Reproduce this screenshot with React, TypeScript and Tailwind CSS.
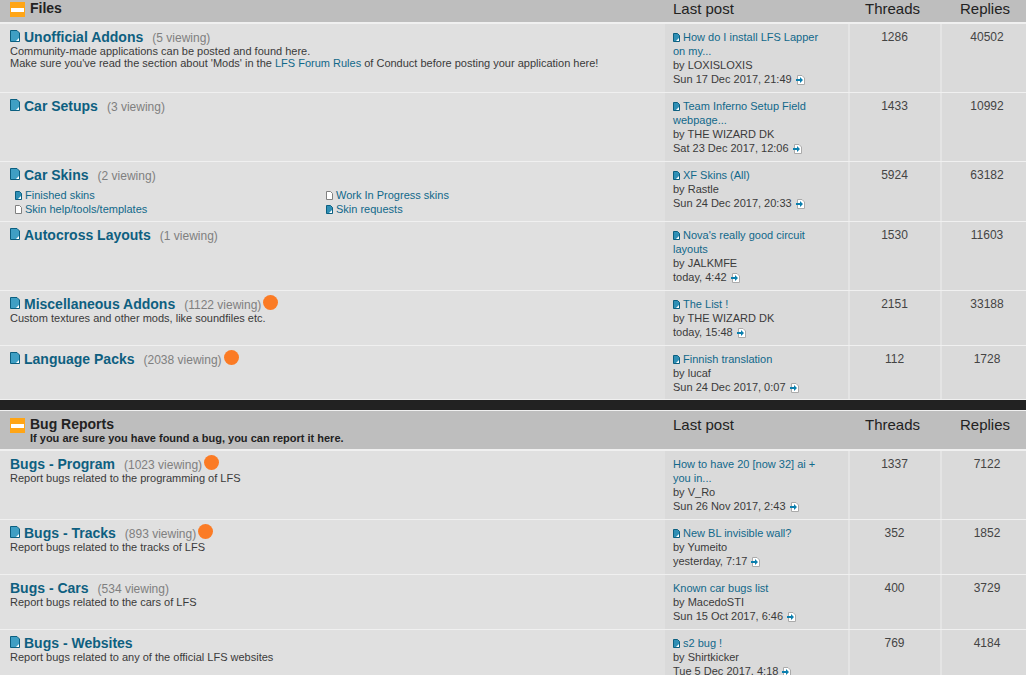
import type { ReactNode } from "react";

type Post = {
  icon?: boolean;
  title: string[];
  by: string;
  date: string;
};

type Forum = {
  name: string;
  viewing?: string;
  icon?: boolean;
  hot?: boolean;
  desc?: ReactNode;
  subs?: boolean;
  post: Post;
  threads: string;
  replies: string;
  height: string;
};

function DocIcon() {
  return (
    <svg width="10" height="12" viewBox="0 0 10 12" className="inline-block shrink-0">
      <path d="M.5.5H7L9.500 3V11.500H.5Z" fill="#3f9fc4" stroke="#0b5f80" />
      <path d="M6 11 9 8V11Z" fill="#ffffff" />
    </svg>
  );
}

function SmallDoc({ white = false }: { white?: boolean }) {
  return (
    <svg width="7" height="9" viewBox="0 0 7 9" className="inline-block shrink-0">
      <path
        d="M.5.5H4.500L6.500 2.500V8.500H.5Z"
        fill={white ? "#ffffff" : "#2f8fb5"}
        stroke={white ? "#808080" : "#0b5f80"}
      />
      {!white && <path d="M3 8 6 5V8Z" fill="#ffffff" />}
    </svg>
  );
}

function GoIcon() {
  return (
    <svg width="9" height="10" viewBox="0 0 9 10" className="ml-[4px] inline-block align-[-2px]">
      <path d="M1.500.5H6L8.500 3V9.500H1.500Z" fill="#ffffff" stroke="#aaaaaa" />
      <path d="M0 4H4V2L7 5 4 8V6H0Z" fill="#0b7fae" />
    </svg>
  );
}

function Minus() {
  return (
    <div className="flex h-[15px] w-[15px] items-center bg-[#ffa516] px-[1px]">
      <div className="h-[4px] w-full bg-white" />
    </div>
  );
}

function Dot() {
  return <span className="ml-[2px] h-[15px] w-[15px] -translate-y-[1px] rounded-full bg-[#fb7b25]" />;
}

function HeaderCols() {
  return (
    <>
      <div className="w-[183px] pl-[8px] text-[15px] leading-[18px] text-[#222222]">Last post</div>
      <div className="w-[92px] pl-[17px] text-[15px] leading-[18px] text-[#222222]">Threads</div>
      <div className="flex-1 pl-[20px] text-[15px] leading-[18px] text-[#222222]">Replies</div>
    </>
  );
}

function ForumRow({ f }: { f: Forum }) {
  return (
    <div className={`flex border-b border-[#f0f0f0] ${f.height}`}>
      <div className="w-[665px] bg-[#e0e0e0] pl-[10px] pt-[5px]">
        <div className="flex h-[16px] items-start">
          {f.icon && (
            <span className="mr-[4px] mt-[1px] flex">
              <DocIcon />
            </span>
          )}
          <a className="text-[14px] leading-[17px] font-bold text-[#0e5f80]">{f.name}</a>
          {f.viewing && (
            <span className="ml-[9px] text-[12px] leading-[18px] text-[#7f7f7f]">({f.viewing} viewing)</span>
          )}
          {f.hot && <Dot />}
        </div>
        {f.desc && <div className="text-[11px] leading-[12px] text-[#3a3a3a]">{f.desc}</div>}
        {f.subs && (
          <div className="mt-[5px] grid grid-cols-[311px_1fr] pl-[5px] text-[11px] leading-[14px] text-[#11688a]">
            <div className="flex items-center gap-[3px]">
              <SmallDoc />
              Finished skins
            </div>
            <div className="flex items-center gap-[3px]">
              <SmallDoc white />
              Work In Progress skins
            </div>
            <div className="flex items-center gap-[3px]">
              <SmallDoc white />
              Skin help/tools/templates
            </div>
            <div className="flex items-center gap-[3px]">
              <SmallDoc />
              Skin requests
            </div>
          </div>
        )}
      </div>
      <div className="w-[183px] bg-[#dadada] pl-[8px] pt-[6px] text-[11px] leading-[14px] text-[#3a3a3a]">
        {f.post.title.map((t, i) => (
          <div key={t} className="flex items-center text-[#11688a]">
            {i === 0 && f.post.icon && (
              <span className="mr-[3px] flex">
                <SmallDoc />
              </span>
            )}
            {t}
          </div>
        ))}
        <div>by {f.post.by}</div>
        <div>
          {f.post.date}
          <GoIcon />
        </div>
      </div>
      <div className="w-[92px] border-l-2 border-[#e4e4e4] bg-[#dadada] pt-[6px] pr-[1px] text-center text-[12px] leading-[14px] text-[#444444]">
        {f.threads}
      </div>
      <div className="flex-1 border-l-2 border-[#e4e4e4] bg-[#dadada] pt-[6px] pl-[6px] text-center text-[12px] leading-[14px] text-[#444444]">
        {f.replies}
      </div>
    </div>
  );
}

const files: Forum[] = [
  {
    name: "Unofficial Addons",
    viewing: "5",
    icon: true,
    desc: (
      <>
        Community-made applications can be posted and found here.
        <br />
        Make sure you've read the section about 'Mods' in the <span className="text-[#11688a]">LFS Forum Rules</span> of
        Conduct before posting your application here!
      </>
    ),
    post: { icon: true, title: ["How do I install LFS Lapper", "on my..."], by: "LOXISLOXIS", date: "Sun 17 Dec 2017, 21:49" },
    threads: "1286",
    replies: "40502",
    height: "h-[69px]",
  },
  {
    name: "Car Setups",
    viewing: "3",
    icon: true,
    post: { icon: true, title: ["Team Inferno Setup Field", "webpage..."], by: "THE WIZARD DK", date: "Sat 23 Dec 2017, 12:06" },
    threads: "1433",
    replies: "10992",
    height: "h-[69px]",
  },
  {
    name: "Car Skins",
    viewing: "2",
    icon: true,
    subs: true,
    post: { icon: true, title: ["XF Skins (All)"], by: "Rastle", date: "Sun 24 Dec 2017, 20:33" },
    threads: "5924",
    replies: "63182",
    height: "h-[60px]",
  },
  {
    name: "Autocross Layouts",
    viewing: "1",
    icon: true,
    post: { icon: true, title: ["Nova's really good circuit", "layouts"], by: "JALKMFE", date: "today, 4:42" },
    threads: "1530",
    replies: "11603",
    height: "h-[69px]",
  },
  {
    name: "Miscellaneous Addons",
    viewing: "1122",
    icon: true,
    hot: true,
    desc: "Custom textures and other mods, like soundfiles etc.",
    post: { icon: true, title: ["The List !"], by: "THE WIZARD DK", date: "today, 15:48" },
    threads: "2151",
    replies: "33188",
    height: "h-[55px]",
  },
  {
    name: "Language Packs",
    viewing: "2038",
    icon: true,
    hot: true,
    post: { icon: true, title: ["Finnish translation"], by: "lucaf", date: "Sun 24 Dec 2017, 0:07" },
    threads: "112",
    replies: "1728",
    height: "h-[54px]",
  },
];

const bugs: Forum[] = [
  {
    name: "Bugs - Program",
    viewing: "1023",
    hot: true,
    desc: "Report bugs related to the programming of LFS",
    post: { title: ["How to have 20 [now 32] ai +", "you in..."], by: "V_Ro", date: "Sun 26 Nov 2017, 2:43" },
    threads: "1337",
    replies: "7122",
    height: "h-[69px]",
  },
  {
    name: "Bugs - Tracks",
    viewing: "893",
    icon: true,
    hot: true,
    desc: "Report bugs related to the tracks of LFS",
    post: { icon: true, title: ["New BL invisible wall?"], by: "Yumeito", date: "yesterday, 7:17" },
    threads: "352",
    replies: "1852",
    height: "h-[55px]",
  },
  {
    name: "Bugs - Cars",
    viewing: "534",
    desc: "Report bugs related to the cars of LFS",
    post: { title: ["Known car bugs list"], by: "MacedoSTI", date: "Sun 15 Oct 2017, 6:46" },
    threads: "400",
    replies: "3729",
    height: "h-[55px]",
  },
  {
    name: "Bugs - Websites",
    icon: true,
    desc: "Report bugs related to any of the official LFS websites",
    post: { icon: true, title: ["s2 bug !"], by: "Shirtkicker", date: "Tue 5 Dec 2017, 4:18" },
    threads: "769",
    replies: "4184",
    height: "h-[55px]",
  },
];

export default function App() {
  return (
    <div className="h-[675px] overflow-hidden bg-[#222222] font-['Liberation_Sans',Arial,sans-serif]">
      {/* Files */}
      <div className="flex h-[24px] border-b-2 border-[#f0f0f0] bg-[#bebebe]">
        <div className="flex w-[665px] items-start gap-[5px] pl-[10px] pt-[2px]">
          <Minus />
          <span className="text-[14px] leading-[13px] font-bold text-[#222222]">Files</span>
        </div>
        <HeaderCols />
      </div>
      {files.map((f) => (
        <ForumRow key={f.name} f={f} />
      ))}

      <div className="h-[10px]" />

      {/* Bug Reports */}
      <div className="flex h-[41px] border-y border-b-2 border-[#f0f0f0] bg-[#bebebe] pt-[5px]">
        <div className="flex w-[665px] items-start gap-[5px] pl-[10px]">
          <div className="mt-[2px]">
            <Minus />
          </div>
          <div>
            <div className="text-[14px] leading-[16px] font-bold text-[#222222]">Bug Reports</div>
            <div className="text-[11px] leading-[12px] font-bold text-[#222222]">
              If you are sure you have found a bug, you can report it here.
            </div>
          </div>
        </div>
        <HeaderCols />
      </div>
      {bugs.map((f) => (
        <ForumRow key={f.name} f={f} />
      ))}
    </div>
  );
}
